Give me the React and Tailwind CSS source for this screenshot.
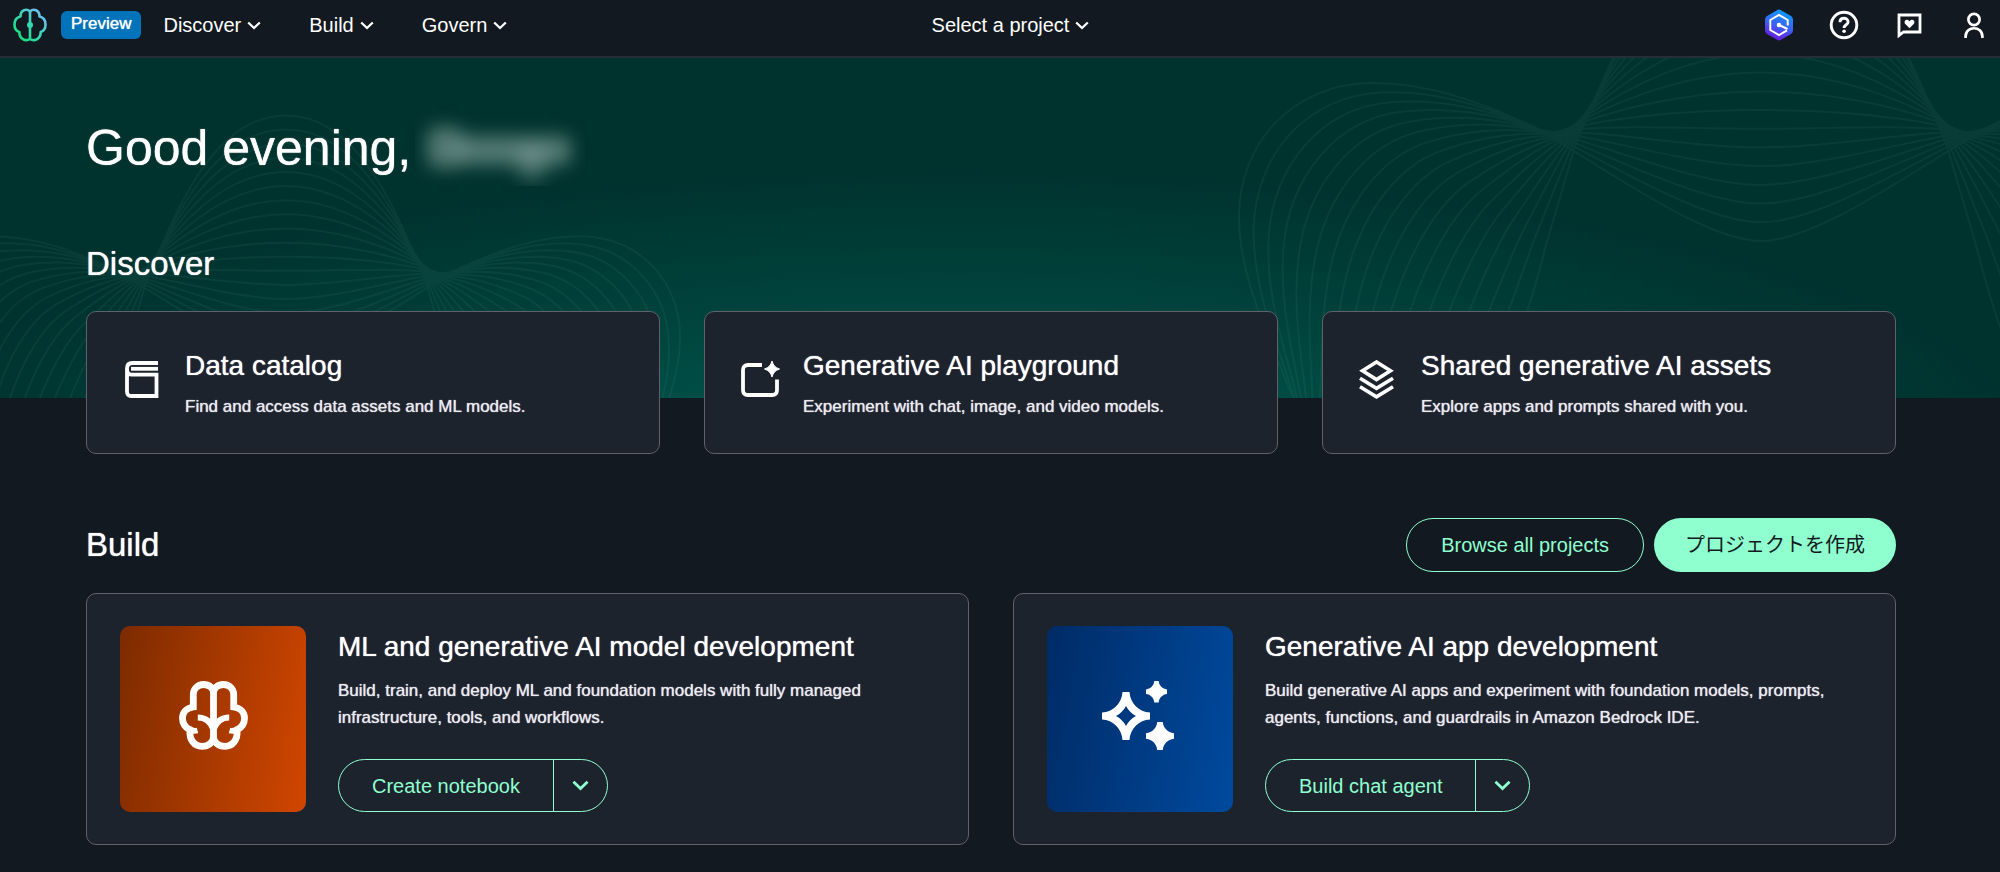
import React from "react";

const NAV_ITEMS = ["Discover", "Build", "Govern"];

const Chevron = ({ className }) => (
  <svg viewBox="0 0 14 9" className={className} fill="none" stroke="currentColor" strokeWidth="2.3" aria-hidden="true">
    <path d="M1.2 1.500L7 7l5.8-5.500" />
  </svg>
);

const LogoIcon = () => (
  <svg viewBox="0 0 34 34" className="size-[34px]" fill="none" aria-hidden="true">
    <defs>
      <linearGradient id="logo" x1="4" y1="30" x2="30" y2="6" gradientUnits="userSpaceOnUse">
        <stop stopColor="#14e07c" />
        <stop offset="0.5" stopColor="#35d8ae" />
        <stop offset="1" stopColor="#72bdf5" />
      </linearGradient>
    </defs>
    <g stroke="url(#logo)" strokeWidth="2.6" strokeLinejoin="round">
      <path d="M17 3.500C13.500 0 7.500 2 7.500 8.500 3 9.500 1.500 12.500 1.500 16.500c0 4 1.500 6.500 4.800 7.500 0 6.500 6 10 10.700 7" />
      <path d="M17 3.500C20.500 0 26.500 2 26.500 8.500c4.500 1 6 4 6 8 0 4-1.500 6.500-4.800 7.500 0 6.500-6 10-10.700 7" />
      <path d="M17 3l.01 28.500" />
    </g>
    <circle cx="17" cy="17" r="3" fill="#35d8ae" />
  </svg>
);

const AssistantIcon = () => (
  <svg viewBox="0 0 30 32" className="h-8 w-[30px]" fill="none" aria-hidden="true">
    <defs>
      <linearGradient id="assistant" x1="20" y1="2" x2="10" y2="30" gradientUnits="userSpaceOnUse">
        <stop stopColor="#0c9cff" />
        <stop offset="0.5" stopColor="#3a62f5" />
        <stop offset="1" stopColor="#6a1bdc" />
      </linearGradient>
    </defs>
    <path
      d="M13 1.200a4 4 0 014 0l10 5.800a4 4 0 012 3.400v11.200a4 4 0 01-2 3.400l-10 5.800a4 4 0 01-4 0L3 25a4 4 0 01-2-3.400V10.400A4 4 0 013 7z"
      fill="url(#assistant)"
    />
    <path d="M23.700 16.500V11L15 6l-8.700 5v10l8.700 5 8-4.600" stroke="#fff" strokeWidth="2" />
    <path d="M15 16l8.500 4" stroke="#fff" strokeWidth="2.200" />
    <circle cx="15" cy="16" r="2.300" fill="#fff" />
  </svg>
);

const HelpIcon = () => (
  <svg viewBox="0 0 30 30" className="size-[30px]" fill="none" stroke="currentColor" strokeWidth="2.9" aria-hidden="true">
    <circle cx="15" cy="15" r="12.800" />
    <path d="M11 12.200c0-2.500 1.700-4 4-4s4.100 1.500 4.100 3.700c0 2.800-4 2.900-4 6" />
    <circle cx="15.100" cy="21.300" r="1.800" fill="currentColor" stroke="none" />
  </svg>
);

const FeedbackIcon = () => (
  <svg viewBox="0 0 25 25" className="size-[25px]" fill="none" aria-hidden="true">
    <path d="M2 2h21v17H6.500L2 22.500z" stroke="currentColor" strokeWidth="2.800" />
    <path
      d="M12.500 15.200l-4.200-4.100c-1.400-1.600-.6-4.200 1.500-4.300 1.200 0 2.100.6 2.700 1.500.6-.9 1.500-1.500 2.700-1.500 2.100.1 2.900 2.700 1.500 4.300z"
      fill="currentColor"
    />
  </svg>
);

const UserIcon = () => (
  <svg viewBox="0 0 20 27" className="h-[27px] w-5" fill="none" stroke="currentColor" strokeWidth="2.7" aria-hidden="true">
    <circle cx="10" cy="7.500" r="5.600" />
    <path d="M1.600 26v-1.500c0-11 16.800-11 16.800 0V26" />
  </svg>
);

const CatalogIcon = () => (
  <svg viewBox="0 0 40 40" className="size-10 shrink-0" fill="none" stroke="currentColor" strokeWidth="3.8" aria-hidden="true">
    <path d="M36 3H10.500Q5 3 5 8.500V31.500q0 4.500 4.500 4.500h25V14.600H9.500Q5 14.600 5 9" />
    <path d="M36 8.800H9" strokeWidth="3.800" />
  </svg>
);

const PlaygroundIcon = () => (
  <svg viewBox="0 0 40 40" className="size-10 shrink-0" fill="none" aria-hidden="true">
    <path d="M22 5H8Q3 5 3 10v20q0 5 5 5h24q5 0 5-5V19.500" stroke="currentColor" strokeWidth="3.800" />
    <path d="M32 1c1.300 4.500 3.200 6.500 7.500 8-4.300 1.500-6.200 3.500-7.500 8-1.300-4.500-3.200-6.500-7.500-8C28.800 7.500 30.700 5.500 32 1z" fill="currentColor" stroke="currentColor" />
  </svg>
);

const LayersIcon = () => (
  <svg viewBox="0 0 40 40" className="size-10 shrink-0" fill="none" stroke="currentColor" strokeWidth="3.6" aria-hidden="true">
    <path d="M18.500 2l14 8.800-14 8.800-14-8.800z" />
    <path d="M2 18.300L18.500 28.300l16.500-10" />
    <path d="M2 26.800L18.500 36.800l16.500-10" />
  </svg>
);

const BrainIcon = () => (
  <svg viewBox="0 0 69 69" className="size-[69px]" fill="none" stroke="#fff" strokeWidth="6.8" aria-hidden="true">
    <path d="M34.500 12c0-5-4.300-8.500-10-8.500S14.300 8 14.300 13.500V26C7 27 3.500 32 3.500 37.200c0 5.300 3 9.300 7.500 11.800-1 10 4.500 16.300 12 16.300 6.500 0 11.500-4.300 11.500-9.300" />
    <path d="M34.500 12c0-5 4.300-8.500 10-8.500S54.700 8 54.700 13.500V26c7.300 1 10.800 6 10.800 11.200 0 5.300-3 9.300-7.500 11.800 1 10-4.500 16.300-12 16.300-6.500 0-11.500-4.300-11.500-9.300" />
    <path d="M34.500 10v48" />
    <path d="M18.800 36.500c8 0 13 4.500 15.700 12M50.200 36.500c-8 0-13 4.500-15.700 12" strokeWidth="6.200" />
    <path d="M10 47c2 2.500 5.500 3.300 8.500 2.500M59 47c-2 2.500-5.500 3.300-8.500 2.500" strokeWidth="5.600" />
  </svg>
);

const SparklesIcon = () => (
  <svg viewBox="0 0 72 69" className="h-[69px] w-[72px]" fill="#fff" aria-hidden="true">
    <path
      fillRule="evenodd"
      d="M20.500 11h7C28 22 37 31 48 31.500v7C37 39 28 48 27.500 59h-7C20 48 11 39 0 38.500v-7C11 31 20 22 20.500 11zM24 25c-2 4-6 8-10 10 4 2 8 6 10 10 2-4 6-8 10-10-4-2-8-6-10-10z"
    />
    <path d="M52.300 0h4.400c.4 4.500 3.800 8 8.300 8.400V13c-4.500.4-7.900 3.900-8.300 8.400h-4.400c-.4-4.500-3.800-8-8.300-8.400V8.400c4.500-.4 7.900-3.900 8.300-8.400z" />
    <path d="M55.200 41h5.600c.5 5.900 5 10.600 11.200 11.200v5.600c-6.200.6-10.700 5.300-11.200 11.200h-5.600c-.5-5.900-5-10.600-11.200-11.200v-5.600c6.200-.6 10.700-5.300 11.200-11.200z" />
  </svg>
);

// Each wave line is a blend of these two curves, [x, y] pairs measured from the wave's centre
const ARCH = [
  [0, -202], [100, -202], [150, -65], [186, 21], [195, 52], [206, 90], [215, 120],
  [225, 160], [240, 215], [270, 275], [300, 335], [340, 370], [400, 395],
];
const LOBE = [
  [0, 116], [60, 116], [170, 33], [229, 1], [285, -25], [335, -42], [388, -42],
  [470, -42], [522, 20], [522, 91], [522, 155], [490, 215], [469, 271],
];
const LINE_COUNT = 18;

const wavePath = (index, side) => {
  const t = index / (LINE_COUNT - 1);
  const points = ARCH.map(([x, y], i) => {
    const px = side * (x + (LOBE[i][0] - x) * t);
    const py = y + (LOBE[i][1] - y) * t;
    return `${px.toFixed(1)} ${py.toFixed(1)}`;
  });
  return `M${points[0]}C${points.slice(1).join(" ")}`;
};

// One path per wave, so that crossing lines do not add up
const WAVE_PATH = Array.from({ length: LINE_COUNT }, (_, i) => wavePath(i, 1) + wavePath(i, -1)).join("");

const HeroWaves = () => (
  <svg
    viewBox="0 0 2000 340"
    preserveAspectRatio="xMidYMid slice"
    className="absolute inset-0 size-full"
    fill="none"
    stroke="#5fa89b"
    strokeOpacity="0.09"
    strokeWidth="2"
    aria-hidden="true"
  >
    <path d={WAVE_PATH} transform="translate(286 210) scale(0.755)" vectorEffect="non-scaling-stroke" />
    <path d={WAVE_PATH} transform="translate(1761 67)" vectorEffect="non-scaling-stroke" />
  </svg>
);

// User name, hidden behind a blur
const HiddenName = () => (
  <svg viewBox="0 0 170 76" className="h-[76px] w-[170px]" role="img" aria-label="Hidden user name">
    <defs>
      <filter id="soft" x="-30%" y="-60%" width="160%" height="220%">
        <feGaussianBlur stdDeviation="9" />
      </filter>
    </defs>
    <g filter="url(#soft)" fill="#9dbab3">
      <rect x="12" y="17" width="36" height="41" rx="10" fillOpacity="0.52" />
      <rect x="42" y="26" width="114" height="29" rx="8" fillOpacity="0.52" />
      <rect x="103" y="36" width="28" height="34" rx="8" fillOpacity="0.36" />
    </g>
  </svg>
);

const NavBar = () => (
  <header className="grid h-[58px] grid-cols-[1fr_auto_1fr] items-center border-b-2 border-[#262e39] bg-[#131920] pr-[10px] pb-1.5 pl-[13px] text-[20px] leading-7 text-white">
    <div className="flex items-center">
      <a href="#home" aria-label="Home">
        <LogoIcon />
      </a>
      <span className="ml-[14px] flex h-7 items-center rounded-md bg-[#0073bb] px-[10px] pb-0.5 text-[17px]">
        Preview
      </span>
      <nav className="ml-[22px]">
        <ul className="flex gap-12">
          {NAV_ITEMS.map((item) => (
            <li key={item}>
              <button className="flex items-center gap-1.5">
                {item}
                <Chevron className="h-[9px] w-[14px]" />
              </button>
            </li>
          ))}
        </ul>
      </nav>
    </div>
    <button className="ml-[18px] flex items-center gap-1.5">
      Select a project
      <Chevron className="h-[9px] w-[14px]" />
    </button>
    <div className="flex justify-end gap-[33px]">
      <button aria-label="Assistant" className="flex size-8 items-center justify-center">
        <AssistantIcon />
      </button>
      <button aria-label="Help" className="flex size-8 items-center justify-center">
        <HelpIcon />
      </button>
      <button aria-label="Feedback" className="flex size-8 items-center justify-center">
        <FeedbackIcon />
      </button>
      <button aria-label="Account" className="flex size-8 items-center justify-center">
        <UserIcon />
      </button>
    </div>
  </header>
);

const DiscoverCard = ({ icon, title, children }) => (
  <a
    href="#discover"
    className="flex gap-[23px] rounded-[10px] border border-[#5d626b] bg-[#1c232d] pt-9 pr-6 pb-[33px] pl-[35px]"
  >
    <div className="pt-3">{icon}</div>
    <div>
      <h3 className="text-[28px] leading-9">{title}</h3>
      <p className="mt-[9px] text-[17px] leading-[27px] text-[#ebebf0]">{children}</p>
    </div>
  </a>
);

const SplitButton = ({ label }) => (
  <div className="mt-7 flex h-[53px] w-fit rounded-full border border-[#8fffcf] text-[20px] text-[#8fffcf]">
    <button className="px-[33px]">{label}</button>
    <button aria-label={`More options for ${label}`} className="flex w-[54px] items-center justify-center border-l border-[#8fffcf]">
      <Chevron className="h-[11px] w-[17px]" />
    </button>
  </div>
);

const BuildCard = ({ tile, title, action, children }) => (
  <div className="flex gap-8 rounded-[10px] border border-[#5d626b] bg-[#1c232d] px-[33px] py-8">
    {tile}
    <div className="pt-[3px]">
      <h3 className="text-[28px] leading-9">{title}</h3>
      <p className="mt-3 text-[17px] leading-[27px] text-[#ebebf0]">{children}</p>
      <SplitButton label={action} />
    </div>
  </div>
);

const App = () => {
  return (
    <div className="min-h-screen bg-[#131920] pb-6 font-['Liberation_Sans','Noto_Sans_CJK_JP',sans-serif] text-white [text-shadow:0_0_1px_currentColor]">
      <NavBar />
      <main>
        <div className="relative overflow-hidden bg-[#00322e] bg-[radial-gradient(54%_80%_at_48%_112%,#005b51_0%,#00443d_50%,#00322e_100%)] pt-[52px] pr-[104px] pb-[114px] pl-[86px]">
          <HeroWaves />
          <div className="relative">
            <h1 className="flex items-center gap-1 text-[50px] leading-[60px]">
              Good evening, <HiddenName />
            </h1>
            <h2 className="mt-[58px] text-[33px] leading-10">Discover</h2>
          </div>
        </div>

        <section className="relative -mt-[87px] grid grid-cols-3 gap-11 pr-[104px] pl-[86px]">
          <DiscoverCard icon={<CatalogIcon />} title="Data catalog">
            Find and access data assets and ML models.
          </DiscoverCard>
          <DiscoverCard icon={<PlaygroundIcon />} title="Generative AI playground">
            Experiment with chat, image, and video models.
          </DiscoverCard>
          <DiscoverCard icon={<LayersIcon />} title="Shared generative AI assets">
            Explore apps and prompts shared with you.
          </DiscoverCard>
        </section>

        <section className="mt-16 pr-[104px] pl-[86px]">
          <div className="flex items-center justify-between">
            <h2 className="text-[33px] leading-10">Build</h2>
            <div className="flex gap-[10px] text-[20px]">
              <button className="h-[54px] rounded-full border border-[#8fffcf] px-[34px] text-[#8fffcf]">
                Browse all projects
              </button>
              <button className="h-[54px] rounded-full bg-[#8fffcf] px-[31px] text-[#131920] [text-shadow:none]">
                プロジェクトを作成
              </button>
            </div>
          </div>
          <div className="mt-[21px] grid grid-cols-2 gap-11">
            <BuildCard
              title="ML and generative AI model development"
              action="Create notebook"
              tile={
                <div className="flex size-[186px] shrink-0 items-center justify-center rounded-[10px] bg-linear-[100deg,#7d2b00,#d14600] pb-2">
                  <BrainIcon />
                </div>
              }
            >
              Build, train, and deploy ML and foundation models with fully managed
              infrastructure, tools, and workflows.
            </BuildCard>
            <BuildCard
              title="Generative AI app development"
              action="Build chat agent"
              tile={
                <div className="flex size-[186px] shrink-0 items-center justify-center rounded-[10px] bg-linear-[100deg,#002b66,#004a9e] pr-1 pb-2">
                  <SparklesIcon />
                </div>
              }
            >
              Build generative AI apps and experiment with foundation models, prompts,
              agents, functions, and guardrails in Amazon Bedrock IDE.
            </BuildCard>
          </div>
        </section>
      </main>
    </div>
  );
};

export default App;
